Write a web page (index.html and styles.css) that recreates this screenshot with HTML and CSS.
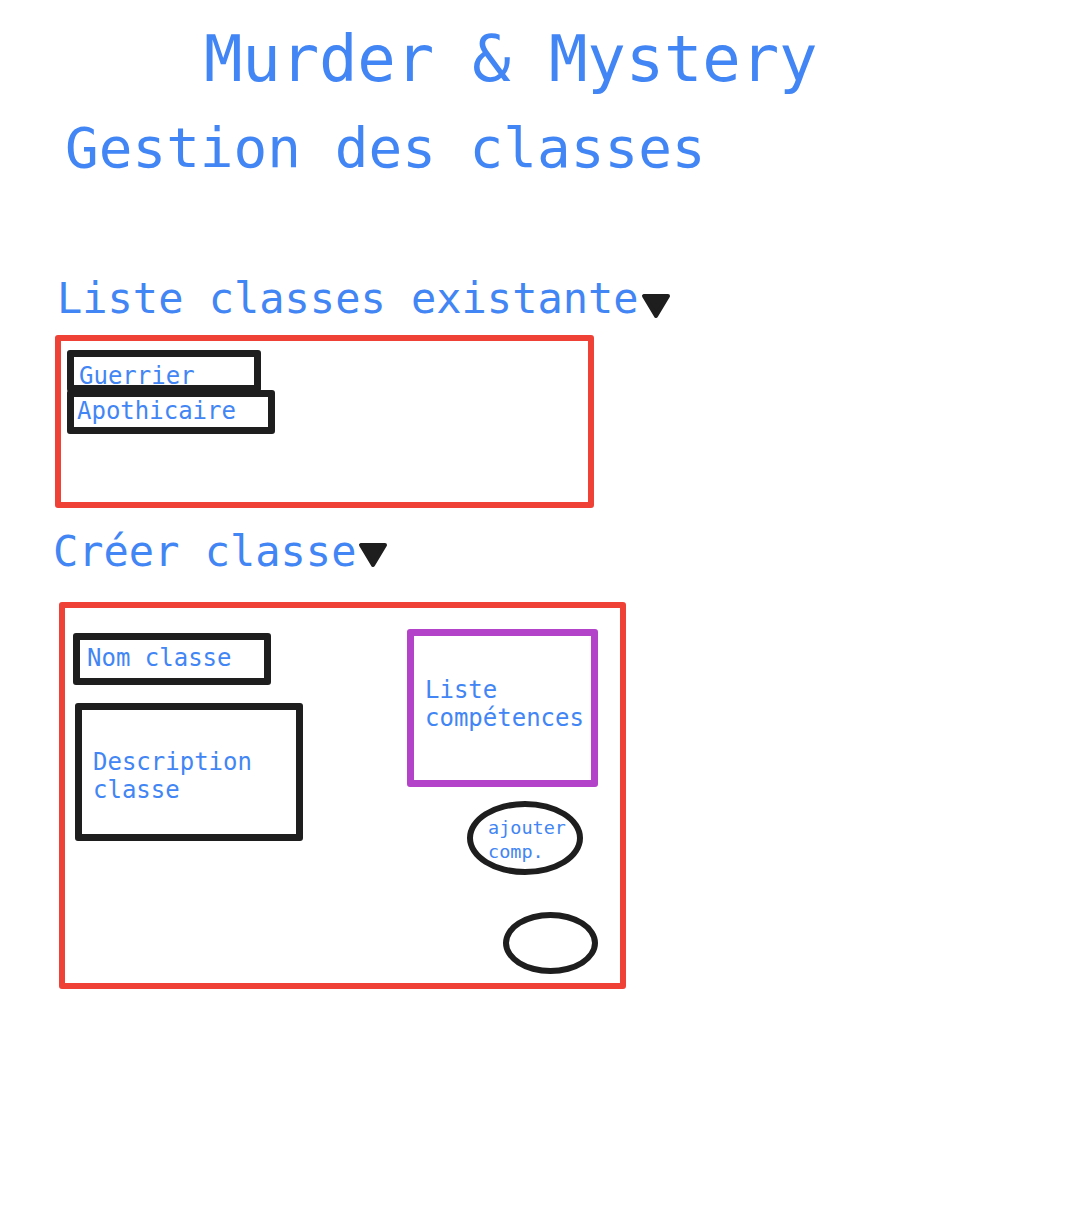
FILE: index.html
```html
<!DOCTYPE html>
<html lang="fr">

<head>
    <meta charset="UTF-8">
    <meta name="viewport" content="width=device-width, initial-scale=1.0">
    <title>Murder &amp; Mystery - Gestion des classes</title>

    <link rel="stylesheet" href="styles.css">
</head>

<body>
    <div class="main">
        <h1 class="title">Murder &amp; Mystery</h1>
        <h2 class="subtitle">Gestion des classes</h2>

        <!-- liste des classes -->
        <div class="section-head head-list">
            <span>Liste classes existante</span>
            <svg class="arrow" width="30" height="26" viewBox="0 0 30 26">
                <path d="M3 3 L27 3 L15 23 Z" fill="#1e1e1e" stroke="#1e1e1e" stroke-width="4" stroke-linejoin="round" />
            </svg>
        </div>
        <div class="panel panel-list">
            <div class="item item-guerrier">Guerrier</div>
            <div class="item item-apothicaire">Apothicaire</div>
        </div>

        <!-- creer une classe -->
        <div class="section-head head-create">
            <span>Créer classe</span>
            <svg class="arrow" width="30" height="26" viewBox="0 0 30 26">
                <path d="M3 3 L27 3 L15 23 Z" fill="#1e1e1e" stroke="#1e1e1e" stroke-width="4" stroke-linejoin="round" />
            </svg>
        </div>
        <div class="panel panel-create">
            <div class="col-left">
                <div class="field field-name">Nom classe</div>
                <div class="field field-desc">Description<br>classe</div>
            </div>
            <div class="col-right">
                <div class="skills">Liste<br>compétences</div>
                <div class="oval oval-add">ajouter<br>comp.</div>
                <div class="oval oval-ok"></div>
            </div>
        </div>
    </div>
</body>

</html>
```

FILE: styles.css
```css
* {
    box-sizing: border-box;
}

body {
    margin: 0;
    background-color: #fff;
    font-family: "DejaVu Sans Mono", "Liberation Mono", monospace;
    color: #4285f4;
}

h1,
h2 {
    margin: 0;
    font-weight: normal;
}

.main {
    width: 100%;
    min-height: 1220px;
    padding-top: 27px;
}

.title {
    font-size: 64px;
    line-height: 1;
    margin-left: 204px;
    letter-spacing: -0.2px;
}

.subtitle {
    font-size: 56px;
    line-height: 1;
    margin-top: 29px;
    margin-left: 65px;
}

.section-head {
    display: flex;
    align-items: flex-start;
    font-size: 42px;
    line-height: 1;
}

.head-list {
    margin-top: 102px;
    margin-left: 57px;
}

.head-list .arrow {
    margin-top: 15px;
    margin-left: 2px;
}

.head-create {
    margin-top: 23px;
    margin-left: 53px;
}

.head-create .arrow {
    margin-top: 11px;
    margin-left: 2px;
}

.panel {
    border: 6px solid #ef4136;
    border-radius: 3px;
}

.panel-list {
    width: 539px;
    height: 173px;
    margin-top: 15px;
    margin-left: 55px;
    padding-top: 9px;
    padding-left: 6px;
}

.item {
    border: 7px solid #1e1e1e;
    border-radius: 3px;
    font-size: 24px;
    line-height: 24px;
    white-space: nowrap;
}

.item-guerrier {
    width: 194px;
    height: 42px;
    padding-top: 7px;
    padding-left: 5px;
}

.item-apothicaire {
    width: 208px;
    height: 44px;
    margin-top: -2px;
    padding-top: 2px;
    padding-left: 3px;
}

.panel-create {
    width: 567px;
    height: 387px;
    margin-top: 29px;
    margin-left: 59px;
    display: flex;
}

.col-left {
    display: flex;
    flex-direction: column;
    align-items: flex-start;
    padding-top: 25px;
    padding-left: 8px;
}

.field {
    border: 7px solid #1e1e1e;
    border-radius: 3px;
    font-size: 24px;
    white-space: nowrap;
}

.field-name {
    width: 198px;
    height: 52px;
    line-height: 24px;
    padding-top: 6px;
    padding-left: 7px;
}

.field-desc {
    width: 228px;
    height: 138px;
    margin-top: 18px;
    margin-left: 2px;
    line-height: 28px;
    padding-top: 38px;
    padding-left: 11px;
}

.col-right {
    margin-left: auto;
    margin-right: 22px;
    display: flex;
    flex-direction: column;
    align-items: flex-end;
    padding-top: 21px;
}

.skills {
    width: 191px;
    height: 158px;
    border: 7px solid #b344c9;
    border-radius: 3px;
    font-size: 24px;
    line-height: 28px;
    padding-top: 40px;
    padding-left: 11px;
    white-space: nowrap;
}

.oval {
    border: 6px solid #1e1e1e;
    border-radius: 50%;
}

.oval-add {
    width: 116px;
    height: 74px;
    margin-top: 14px;
    margin-right: 15px;
    font-size: 18.5px;
    line-height: 24px;
    padding-top: 9px;
    padding-left: 15px;
    white-space: nowrap;
}

.oval-ok {
    width: 95px;
    height: 62px;
    margin-top: 37px;
}
```
